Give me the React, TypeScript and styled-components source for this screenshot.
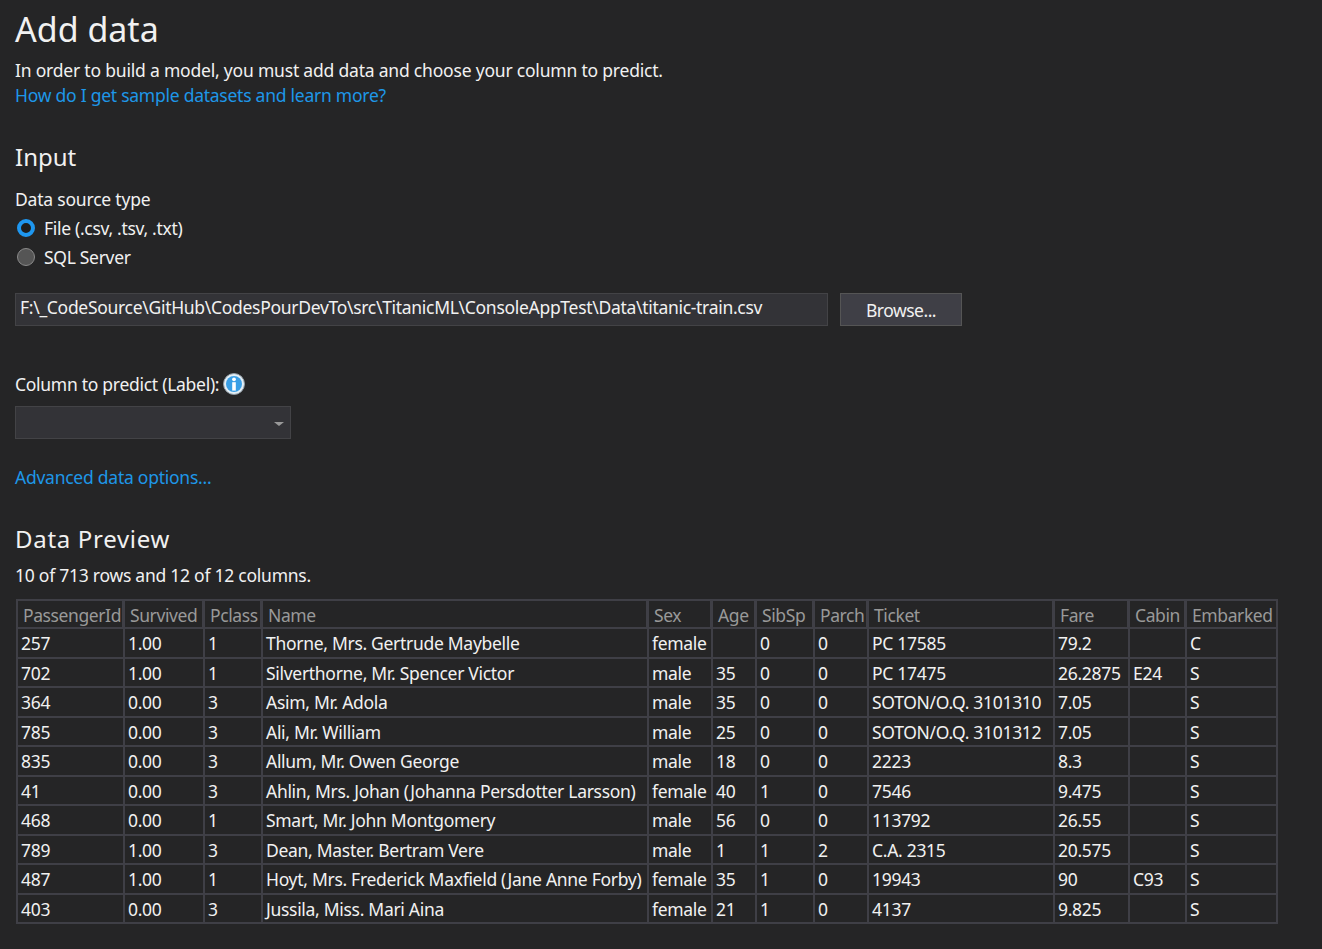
import React from "react";
import styled, { createGlobalStyle } from "styled-components";

const GlobalStyle = createGlobalStyle`
  html, body {
    margin: 0;
    padding: 0;
    background: #252526;
    color: #f1f1f1;
    font-family: "Noto Sans", "Open Sans", sans-serif;
    font-size: 17.5px;
    letter-spacing: -0.2px;
  }
`;

const Page = styled.div`
  width: 1322px;
  height: 949px;
  box-sizing: border-box;
  padding: 8px 0 0 15px;
  overflow: hidden;
`;

const Title = styled.h1`
  margin: 0 0 6px;
  height: 44px;
  line-height: 42px;
  font-size: 34px;
  font-weight: 400;
  letter-spacing: 0;
`;

const Line = styled.div`
  height: 25px;
  line-height: 25px;
  white-space: nowrap;
`;

const TextLink = styled.a`
  display: block;
  height: 25px;
  line-height: 25px;
  color: #1e97e8;
  letter-spacing: -0.25px;
  white-space: nowrap;
`;

const SectionTitle = styled.h2<{ $top: number; $spacing?: number }>`
  margin: ${(p) => p.$top}px 0 0;
  height: 36px;
  line-height: 34px;
  font-size: 24px;
  font-weight: 400;
  letter-spacing: ${(p) => p.$spacing ?? 0}px;
`;

const SourceLabel = styled(Line)`
  margin-top: 11px;
`;

const RadioRow = styled.div`
  display: flex;
  align-items: center;
  gap: 9px;
  height: 29px;
  padding-left: 2px;
  letter-spacing: -0.3px;
`;

const FirstRadioRow = styled(RadioRow)`
  margin-top: 1px;
`;

const RadioDot = styled.span<{ $on?: boolean }>`
  width: 18px;
  height: 18px;
  box-sizing: border-box;
  border-radius: 50%;
  background: ${(p) => (p.$on ? "#1e1e1e" : "#555555")};
  border: ${(p) => (p.$on ? "4.5px solid #1e97f0" : "1.5px solid #8a8a8a")};
`;

const PathRow = styled.div`
  display: flex;
  gap: 12px;
  margin-top: 22px;
`;

const PathInput = styled.div`
  width: 813px;
  height: 33px;
  box-sizing: border-box;
  padding-left: 4px;
  line-height: 27px;
  background: #333337;
  border: 1px solid #434346;
  letter-spacing: -0.3px;
  white-space: nowrap;
`;

const BrowseButton = styled.button`
  width: 122px;
  height: 33px;
  padding: 1px 0 0;
  background: #3f3f46;
  border: 1px solid #555555;
  color: #f1f1f1;
  font: inherit;
  letter-spacing: -0.5px;
`;

const PredictLabel = styled.div`
  display: flex;
  align-items: center;
  gap: 4px;
  height: 26px;
  margin-top: 45px;
  letter-spacing: -0.28px;
`;

const Select = styled.div`
  display: flex;
  align-items: center;
  justify-content: flex-end;
  width: 276px;
  height: 33px;
  box-sizing: border-box;
  margin-top: 9px;
  padding-right: 6px;
  background: #333337;
  border: 1px solid #434346;
`;

const Caret = styled.span`
  margin-top: 3px;
  border-left: 5px solid transparent;
  border-right: 5px solid transparent;
  border-top: 4px solid #999999;
`;

const AdvancedLink = styled(TextLink)`
  margin-top: 26px;
`;

const Summary = styled(Line)`
  margin-top: 5px;
  letter-spacing: -0.25px;
`;

const Table = styled.div`
  display: grid;
  grid-template-columns: 107px 80px 58px 386px 64px 44px 58px 54px 186px 75px 57px 89px;
  width: max-content;
  margin: 11px 0 0 1px;
  border: 2px solid #3f3f46;
  box-sizing: border-box;
`;

const HeadCell = styled.div<{ $last?: boolean }>`
  height: 26px;
  line-height: 28px;
  padding-left: 5px;
  color: #999999;
  letter-spacing: -0.4px;
  white-space: nowrap;
  overflow: hidden;
  border-right: ${(p) => (p.$last ? "0" : "3px solid #3f3f46")};
  border-bottom: 2px solid #3f3f46;
`;

const Cell = styled.div<{ $last?: boolean; $end?: boolean }>`
  height: 27.5px;
  line-height: 29px;
  padding-left: 3px;
  letter-spacing: -0.3px;
  white-space: nowrap;
  overflow: hidden;
  border-right: ${(p) => (p.$last ? "0" : "2px solid #3f3f46")};
  border-bottom: ${(p) => (p.$end ? "0" : "2px solid #3f3f46")};
`;

const InfoIcon = () => (
  <svg width="22" height="22" viewBox="0 0 22 22">
    <circle cx="11" cy="11" r="10.5" fill="#e3eef5" stroke="#8f9aa3" strokeWidth="1" />
    <circle cx="11" cy="11" r="8" fill="#3a9fe6" />
    <circle cx="11" cy="6.3" r="1.9" fill="#ffffff" />
    <rect x="9.2" y="9.2" width="3.6" height="8.4" fill="#ffffff" />
  </svg>
);

const columns = [
  "PassengerId",
  "Survived",
  "Pclass",
  "Name",
  "Sex",
  "Age",
  "SibSp",
  "Parch",
  "Ticket",
  "Fare",
  "Cabin",
  "Embarked",
];

const rows = [
  ["257", "1.00", "1", "Thorne, Mrs. Gertrude Maybelle", "female", "", "0", "0", "PC 17585", "79.2", "", "C"],
  ["702", "1.00", "1", "Silverthorne, Mr. Spencer Victor", "male", "35", "0", "0", "PC 17475", "26.2875", "E24", "S"],
  ["364", "0.00", "3", "Asim, Mr. Adola", "male", "35", "0", "0", "SOTON/O.Q. 3101310", "7.05", "", "S"],
  ["785", "0.00", "3", "Ali, Mr. William", "male", "25", "0", "0", "SOTON/O.Q. 3101312", "7.05", "", "S"],
  ["835", "0.00", "3", "Allum, Mr. Owen George", "male", "18", "0", "0", "2223", "8.3", "", "S"],
  ["41", "0.00", "3", "Ahlin, Mrs. Johan (Johanna Persdotter Larsson)", "female", "40", "1", "0", "7546", "9.475", "", "S"],
  ["468", "0.00", "1", "Smart, Mr. John Montgomery", "male", "56", "0", "0", "113792", "26.55", "", "S"],
  ["789", "1.00", "3", "Dean, Master. Bertram Vere", "male", "1", "1", "2", "C.A. 2315", "20.575", "", "S"],
  ["487", "1.00", "1", "Hoyt, Mrs. Frederick Maxfield (Jane Anne Forby)", "female", "35", "1", "0", "19943", "90", "C93", "S"],
  ["403", "0.00", "3", "Jussila, Miss. Mari Aina", "female", "21", "1", "0", "4137", "9.825", "", "S"],
];

export default function App() {
  return (
    <Page>
      <GlobalStyle />
      <Title>Add data</Title>
      <Line>In order to build a model, you must add data and choose your column to predict.</Line>
      <TextLink>How do I get sample datasets and learn more?</TextLink>

      <SectionTitle $top={32}>Input</SectionTitle>
      <SourceLabel>Data source type</SourceLabel>
      <FirstRadioRow>
        <RadioDot $on />
        File (.csv, .tsv, .txt)
      </FirstRadioRow>
      <RadioRow>
        <RadioDot />
        SQL Server
      </RadioRow>

      <PathRow>
        <PathInput>F:\_CodeSource\GitHub\CodesPourDevTo\src\TitanicML\ConsoleAppTest\Data\titanic-train.csv</PathInput>
        <BrowseButton>Browse...</BrowseButton>
      </PathRow>

      <PredictLabel>
        Column to predict (Label):
        <InfoIcon />
      </PredictLabel>
      <Select>
        <Caret />
      </Select>
      <AdvancedLink>Advanced data options...</AdvancedLink>

      <SectionTitle $top={32} $spacing={0.7}>Data Preview</SectionTitle>
      <Summary>10 of 713 rows and 12 of 12 columns.</Summary>
      <Table>
        {columns.map((c, i) => (
          <HeadCell key={c} $last={i === columns.length - 1}>
            {c}
          </HeadCell>
        ))}
        {rows.map((row, r) =>
          row.map((v, i) => (
            <Cell key={`${r}-${i}`} $last={i === row.length - 1} $end={r === rows.length - 1}>
              {v}
            </Cell>
          ))
        )}
      </Table>
    </Page>
  );
}
